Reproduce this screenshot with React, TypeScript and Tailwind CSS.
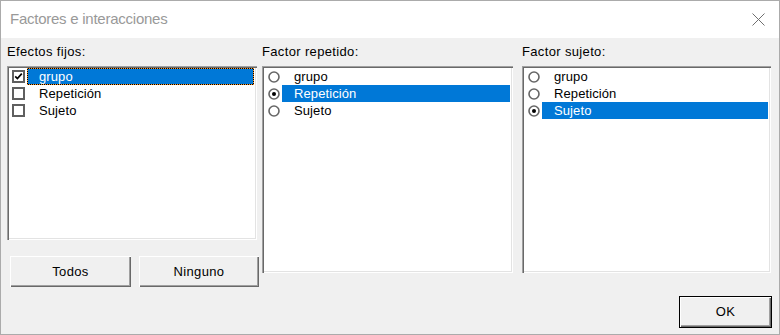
import React from "react";

const font = { fontFamily: '"Liberation Sans", Arial, sans-serif' };

function CheckBox({ checked }: { checked: boolean }) {
  return (
    <div className="w-[13px] h-[13px] border-2 border-[#5f5f5f] bg-white flex items-center justify-center shrink-0">
      {checked && (
        <svg width="9" height="9" viewBox="0 0 9 9">
          <path d="M1.2 4.3 L3.4 6.6 L7.8 1.6" fill="none" stroke="#000" strokeWidth="1.7" />
        </svg>
      )}
    </div>
  );
}

function Radio({ checked }: { checked: boolean }) {
  return (
    <svg width="12" height="12" viewBox="0 0 12 12" className="shrink-0">
      <circle cx="6" cy="6" r="5" fill="#fff" stroke="#666" strokeWidth="1.6" />
      {checked && <circle cx="6" cy="6" r="2" fill="#000" />}
    </svg>
  );
}

type Item = { label: string; checked: boolean; selected: boolean; focus?: boolean };

function ListBox({
  items,
  kind,
  width,
  height,
}: {
  items: Item[];
  kind: "check" | "radio";
  width: string;
  height: string;
}) {
  return (
    <div
      className={`${width} ${height} bg-white pt-[2px] pl-[2px] pr-[2px] shadow-[inset_1px_1px_0_#a0a0a0,inset_2px_2px_0_#696969,inset_-1px_-1px_0_#ffffff,inset_-2px_-2px_0_#e3e3e3]`}
    >
      {items.map((it) => (
        <div key={it.label} className={`flex h-[17px] items-center ${kind === "check" ? "pl-[3px]" : "pl-[4px]"}`}>
          {kind === "check" ? <CheckBox checked={it.checked} /> : <Radio checked={it.checked} />}
          <div className="ml-[2px] mr-[1px] flex-1 h-[17px]">
            {it.selected ? (
              it.focus ? (
                <div className="h-full border border-dotted border-[#ff9a2a] bg-black">
                  <div className="h-full bg-[#0078d7] text-white pl-[11px] text-[13px] tracking-[0.1px] leading-[15px]">{it.label}</div>
                </div>
              ) : (
                <div className="h-full bg-[#0078d7] text-white pl-[12px] text-[13px] tracking-[0.1px] leading-[17px]">{it.label}</div>
              )
            ) : (
              <div className="h-full text-black pl-[12px] text-[13px] tracking-[0.1px] leading-[17px]">{it.label}</div>
            )}
          </div>
        </div>
      ))}
    </div>
  );
}

function Button({ label, width, isDefault }: { label: string; width: string; isDefault?: boolean }) {
  return (
    <div
      className={`${width} ${isDefault ? "h-[32px] border border-black" : "h-[31px]"} bg-[#f0f0f0] flex items-center justify-center text-[13px] tracking-[0.35px] text-black shadow-[inset_1px_1px_0_#ffffff,inset_-1px_-1px_0_#696969,inset_-2px_-2px_0_#a0a0a0]`}
    >
      {label}
    </div>
  );
}

export default function App() {
  return (
    <div style={font} className="w-[780px] h-[335px] border border-[#ababab] bg-[#f0f0f0] flex flex-col overflow-hidden">
      <div className="h-[37px] bg-white flex items-center justify-between pl-[9px] pr-[14px] shrink-0">
        <span className="text-[15px] tracking-[-0.25px] text-[#999999]">Factores e interacciones</span>
        <svg width="13" height="13" viewBox="0 0 13 13">
          <path d="M0.5 0.5 L12.5 12.5 M12.5 0.5 L0.5 12.5" stroke="#6f6f6f" strokeWidth="1" />
        </svg>
      </div>
      <div className="flex pl-[6px]">
        <div className="w-[252px] flex flex-col">
          <div className="h-[28px] pt-[6px] leading-[16px] text-[13px] tracking-[0.35px] text-black">Efectos fijos:</div>
          <ListBox
            kind="check"
            width="w-[250px]"
            height="h-[174px]"
            items={[
              { label: "grupo", checked: true, selected: true, focus: true },
              { label: "Repetición", checked: false, selected: false },
              { label: "Sujeto", checked: false, selected: false },
            ]}
          />
          <div className="flex mt-[16px] pl-[3px] gap-[8px]">
            <Button label="Todos" width="w-[121px]" />
            <Button label="Ninguno" width="w-[120px]" />
          </div>
        </div>
        <div className="w-[251px] ml-[3px] flex flex-col">
          <div className="h-[28px] pt-[6px] leading-[16px] text-[13px] tracking-[0.35px] text-black">Factor repetido:</div>
          <ListBox
            kind="radio"
            width="w-[251px]"
            height="h-[207px]"
            items={[
              { label: "grupo", checked: false, selected: false },
              { label: "Repetición", checked: true, selected: true },
              { label: "Sujeto", checked: false, selected: false },
            ]}
          />
        </div>
        <div className="w-[249px] ml-[9px] flex flex-col">
          <div className="h-[28px] pt-[6px] leading-[16px] text-[13px] tracking-[0.35px] text-black">Factor sujeto:</div>
          <ListBox
            kind="radio"
            width="w-[249px]"
            height="h-[207px]"
            items={[
              { label: "grupo", checked: false, selected: false },
              { label: "Repetición", checked: false, selected: false },
              { label: "Sujeto", checked: true, selected: true },
            ]}
          />
        </div>
      </div>
      <div className="flex justify-end pr-[7px] mt-[9px]">
        <Button label="OK" width="w-[93px]" isDefault />
      </div>
    </div>
  );
}
